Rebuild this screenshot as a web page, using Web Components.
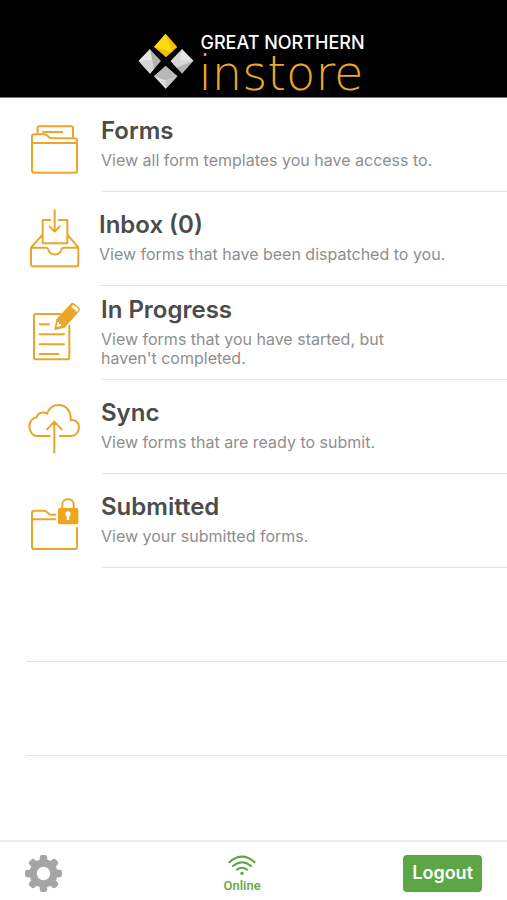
<!DOCTYPE html>
<html lang="en">
<head>
<meta charset="utf-8">
<meta name="viewport" content="width=device-width, initial-scale=1">
<title>Great Northern Instore</title>
<style>
  html, body { margin: 0; background: #fff; }
  body { font-family: Inter, "Liberation Sans", sans-serif; color: #4c4c4c; }
</style>
</head>
<body>
<instore-app></instore-app>
<script>
const define = (name, html) => {
  const template = document.createElement('template');
  template.innerHTML = html;
  customElements.define(name, class extends HTMLElement {
    constructor() {
      super();
      this.attachShadow({ mode: 'open' }).append(template.content.cloneNode(true));
    }
  });
};

define('brand-header', `
  <style>
    :host { display: flex; justify-content: center; align-items: flex-end; gap: 4px; box-sizing: border-box;
      height: 98px; padding: 0 4px 3px 0; background: #000; border-bottom: 1px solid #777; }
    svg { width: 56px; height: 58px; margin-bottom: 3px; }
    .words { display: flex; flex-direction: column; margin: 0; }
    .top { padding-left: 2px; font-size: 18px; line-height: 18px; font-weight: 500; color: #fff; }
    .name { font-family: "DejaVu Sans", sans-serif; font-size: 48px; line-height: 42px; font-weight: 200; color: #efa824; }
  </style>
  <svg viewBox="6 8 168 174" aria-hidden="true">
    <path fill="#f5bd00" d="M89 10 124 50 90 81 54 50Z"/>
    <path fill="#ffd80f" d="M89 10 110 66 54 50Z"/>
    <path fill="#b2b2b5" d="M42 57 75 92 42 130 8 92Z"/>
    <path fill="#d6d6d8" d="M42 57 54 116 42 130 8 92Z"/>
    <path fill="#e6e6e8" d="M42 57 48 88 8 92Z"/>
    <path fill="#b2b2b5" d="M138 57 172 92 138 130 104 92Z"/>
    <path fill="#d6d6d8" d="M138 57 172 92 122 112 104 92Z"/>
    <path fill="#e6e6e8" d="M138 57 172 92 132 88Z"/>
    <path fill="#dcdcde" d="M89 107 124 138 89 175 54 138Z"/>
    <path fill="#b8b8bb" d="M89 107 124 138 89 150 54 138Z"/>
    <path fill="#c6c6c9" d="M124 138 89 175V150Z"/>
  </svg>
  <h1 class="words"><span class="top">GREAT NORTHERN</span><span class="name">instore</span></h1>
`);

define('menu-row', `
  <style>
    :host { display: block; --start: 101px; }
    a { display: flex; align-items: center; box-sizing: border-box; min-height: 94px; padding: 0 48px 0 24px;
      color: inherit; text-decoration: none;
      background: linear-gradient(#e4e4e4, #e4e4e4) var(--start) 100% / 100% 1px no-repeat; }
    .text { display: flex; flex-direction: column; gap: 5px; margin-left: calc(var(--start) - 84px); padding-bottom: 4px; }
    .title { font-size: 24px; line-height: 30px; font-weight: 600; color: #4c4c4c; }
    .desc { font-size: 16px; line-height: 19px; color: #8e8e8e; }
    ::slotted(svg) { flex: none; width: 60px; height: 60px; overflow: visible; fill: none; stroke: #eaa62a;
      stroke-width: 6; stroke-linecap: round; stroke-linejoin: round; }
  </style>
  <a href="#"><slot name="icon"></slot>
    <span class="text"><span class="title"><slot name="title"></slot></span><span class="desc"><slot></slot></span></span></a>
`);

define('empty-row', `
  <style>
    :host { display: block; box-sizing: border-box; height: 94px; margin-left: 26px; border-bottom: 1px solid #e4e4e4; }
  </style>
`);

define('status-bar', `
  <style>
    :host { display: grid; grid-template-columns: 56px 1fr auto; align-items: center; box-sizing: border-box;
      min-height: 60px; padding: 4px 25px 0; border-top: 2px solid #ececec; }
    button { border: 0; margin: 0; padding: 0; background: none; font: inherit; cursor: pointer; }
    .gear { display: flex; height: 38px; align-items: center; }
    .gear svg { width: 37px; height: 37px; }
    .online { display: flex; flex-direction: column; align-items: center; padding-top: 3px; color: #5ba745;
      font: 500 13px/16px Roboto, sans-serif; }
    .online svg { width: 28px; height: 20px; margin-bottom: 3px; }
    .logout { height: 37px; padding: 0 9px; border-radius: 4px; background: #5ba745; color: #fff;
      font-size: 18px; line-height: 22px; font-weight: 600; }
  </style>
  <button class="gear" aria-label="Settings"><svg viewBox="-55 -55 110 110" aria-hidden="true">
    <g fill="#a5a5a5"><rect x="-11" y="-55" width="22" height="110" rx="7"/><rect x="-55" y="-11" width="110" height="22" rx="7"/>
    <g transform="rotate(45)"><rect x="-11" y="-55" width="22" height="110" rx="7"/><rect x="-55" y="-11" width="110" height="22" rx="7"/></g>
    <circle r="42"/></g><circle r="20" fill="#fff"/></svg></button>
  <div class="online" role="status"><svg viewBox="683 76 84 60" fill="none" stroke="#5ba745" stroke-width="6" stroke-linecap="round" aria-hidden="true">
    <path d="M687 98Q725 64 763 98M698 109Q725 86 752 109M710 120Q725 109 740 120"/><circle cx="725" cy="131" r="5" fill="#5ba745" stroke="none"/></svg>Online</div>
  <button class="logout">Logout</button>
`);

define('instore-app', `
  <style>
    :host { display: flex; flex-direction: column; min-height: 100vh; }
    main { flex: 1; }
    .inbox { --start: 99px; }
  </style>
  <brand-header></brand-header>
  <main>
    <menu-row>
      <svg slot="icon" viewBox="27 15 180 180" aria-hidden="true"><path d="M68 72V54Q68 49 73 49H169Q174 49 174 54V81M84 66H142M51 99H186M51 182V80Q51 73 58 73H88Q93 73 97 77L101 81Q105 85 110 85H179Q186 85 186 92V181Q186 188 179 188H58Q51 188 51 182Z"/></svg>
      <span slot="title">Forms</span>View all form templates you have access to.
    </menu-row>
    <menu-row class="inbox">
      <svg slot="icon" viewBox="27 27 180 180" aria-hidden="true"><path d="M119 31V92M104 80 119 95 134 80M107 60H83V130H157V60H131M80 107 48 143V193Q48 199 54 199H184Q190 199 190 193V143L160 107M48 143H91Q99 143 100 149C105 168 134 168 139 149Q140 143 148 143H190"/></svg>
      <span slot="title">Inbox (0)</span>View forms that have been dispatched to you.
    </menu-row>
    <menu-row>
      <svg slot="icon" viewBox="27 39 180 180" aria-hidden="true"><path d="M137 72H62Q57 72 57 77V203Q57 208 62 208H158Q163 208 163 203V107M74 103H102M74 133H147M74 163H147M74 192H131"/><path stroke="none" fill="#eaa62a" fill-rule="evenodd" d="M118 119 124 88 167 41Q173 36 179 41L193 53Q198 58 193 64L149 113 121 120ZM125 111 139 107 138 101 132 102 132 96 128 97ZM169 50 186 66 190 61Q192 58 189 55L179 47Q176 44 173 46Z"/></svg>
      <span slot="title">In Progress</span>View forms that you have started, but<br>haven't completed.
    </menu-row>
    <menu-row>
      <svg slot="icon" viewBox="27 21 180 180" aria-hidden="true"><path d="M104 138H70C50 138 43 122 43 109C43 94 53 83 65 82C67 69 83 64 96 71C103 52 117 45 131 45C152 45 169 62 167 90C182 88 192 98 192 112C192 128 181 138 168 138H134M118 188V96M96 118 118 95 140 118"/></svg>
      <span slot="title">Sync</span>View forms that are ready to submit.
    </menu-row>
    <menu-row>
      <svg slot="icon" viewBox="27 18 180 180" aria-hidden="true"><path d="M51 103H121M121 89H109Q104 89 100 85L96 81Q92 77 87 77H58Q51 77 51 84V185Q51 192 58 192H179Q186 192 186 185V128M142 70V57C142 38 176 38 176 57V70"/><path stroke="none" fill="#efa51c" fill-rule="evenodd" d="M134 69H185Q190 69 190 74V113Q190 118 185 118H134Q129 118 129 113V74Q129 69 134 69ZM155 94V105H163V94A8 8 0 1 0 155 94Z"/></svg>
      <span slot="title">Submitted</span>View your submitted forms.
    </menu-row>
    <empty-row></empty-row>
    <empty-row></empty-row>
  </main>
  <status-bar></status-bar>
`);
</script>
</body>
</html>
